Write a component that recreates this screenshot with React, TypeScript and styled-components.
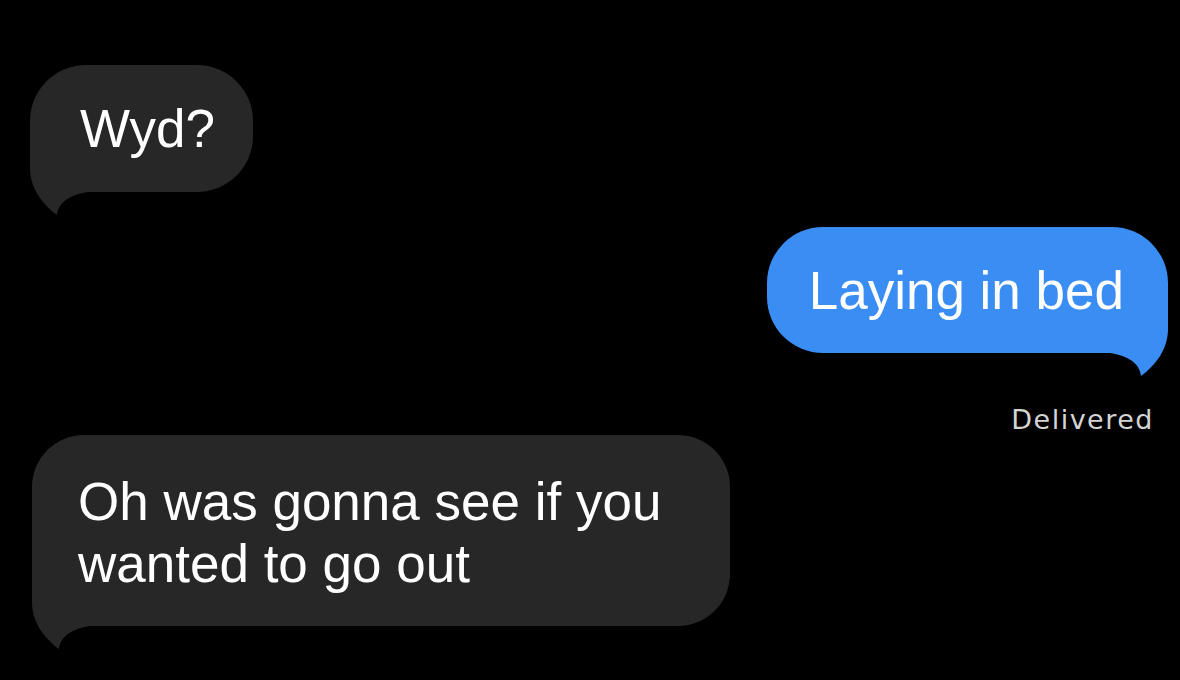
import React from "react";
import styled, { createGlobalStyle } from "styled-components";

const Global = createGlobalStyle`
  html, body {
    margin: 0;
    padding: 0;
    background: #000;
  }
  body {
    width: 1180px;
    height: 680px;
    overflow: hidden;
    font-family: "Liberation Sans", Arial, sans-serif;
  }
`;

const Thread = styled.div`
  display: flex;
  flex-direction: column;
  padding: 65px 12px 0 30px;
  box-sizing: border-box;
  width: 1180px;
  height: 680px;
  background: #000;
`;

const Row = styled.div<{ $side: "left" | "right"; $top?: number; $indent?: number }>`
  display: flex;
  justify-content: ${(p) => (p.$side === "left" ? "flex-start" : "flex-end")};
  margin-top: ${(p) => p.$top ?? 0}px;
  padding-left: ${(p) => p.$indent ?? 0}px;
`;

const Bubble = styled.div<{
  $tone: "gray" | "blue";
  $pad: string;
  $width?: number;
  $radius: number;
}>`
  position: relative;
  box-sizing: border-box;
  width: ${(p) => (p.$width ? `${p.$width}px` : "auto")};
  padding: ${(p) => p.$pad};
  border-radius: ${(p) => p.$radius}px;
  background: ${(p) => (p.$tone === "gray" ? "#272727" : "#3a8df2")};
  color: #fff;
  font-family: "Liberation Sans", Arial, sans-serif;
  font-size: 53px;
  line-height: 62px;
`;

const TailSvg = styled.svg<{ $side: "left" | "right" }>`
  position: absolute;
  bottom: -24px;
  width: 60px;
  height: 84px;
  overflow: visible;
  ${(p) =>
    p.$side === "left"
      ? "left: 0;"
      : "right: 0; transform: scaleX(-1);"}
`;

const Text = styled.span`
  position: relative;
  z-index: 1;
`;

const Status = styled.div`
  align-self: flex-end;
  margin-top: 53px;
  margin-right: 14px;
  font-family: "DejaVu Sans", sans-serif;
  font-size: 27px;
  line-height: 27px;
  letter-spacing: 1.5px;
  color: #d4d4d4;
`;

function Tail({ side, color }: { side: "left" | "right"; color: string }) {
  // y = 60 is the bubble's bottom edge, x = 0 its outer side
  return (
    <TailSvg $side={side} viewBox="0 0 60 84" aria-hidden>
      <path
        d="M0 0 L0 36 C0 56 12 72 27 83 C28 74 34 64 58 60 L58 0 Z"
        fill={color}
      />
    </TailSvg>
  );
}

export default function App() {
  return (
    <>
      <Global />
      <Thread>
        <Row $side="left">
          <Bubble $tone="gray" $pad="33px 38px 32px 50px" $radius={56}>
            <Tail side="left" color="#272727" />
            <Text>Wyd?</Text>
          </Bubble>
        </Row>
        <Row $side="right" $top={35}>
          <Bubble $tone="blue" $pad="33px 44px 31px 42px" $radius={56}>
            <Tail side="right" color="#3a8df2" />
            <Text>Laying in bed</Text>
          </Bubble>
        </Row>
        <Status>Delivered</Status>
        <Row $side="left" $top={2} $indent={2}>
          <Bubble $tone="gray" $pad="36px 40px 31px 46px" $width={698} $radius={52}>
            <Tail side="left" color="#272727" />
            <Text>Oh was gonna see if you wanted to go out</Text>
          </Bubble>
        </Row>
      </Thread>
    </>
  );
}
